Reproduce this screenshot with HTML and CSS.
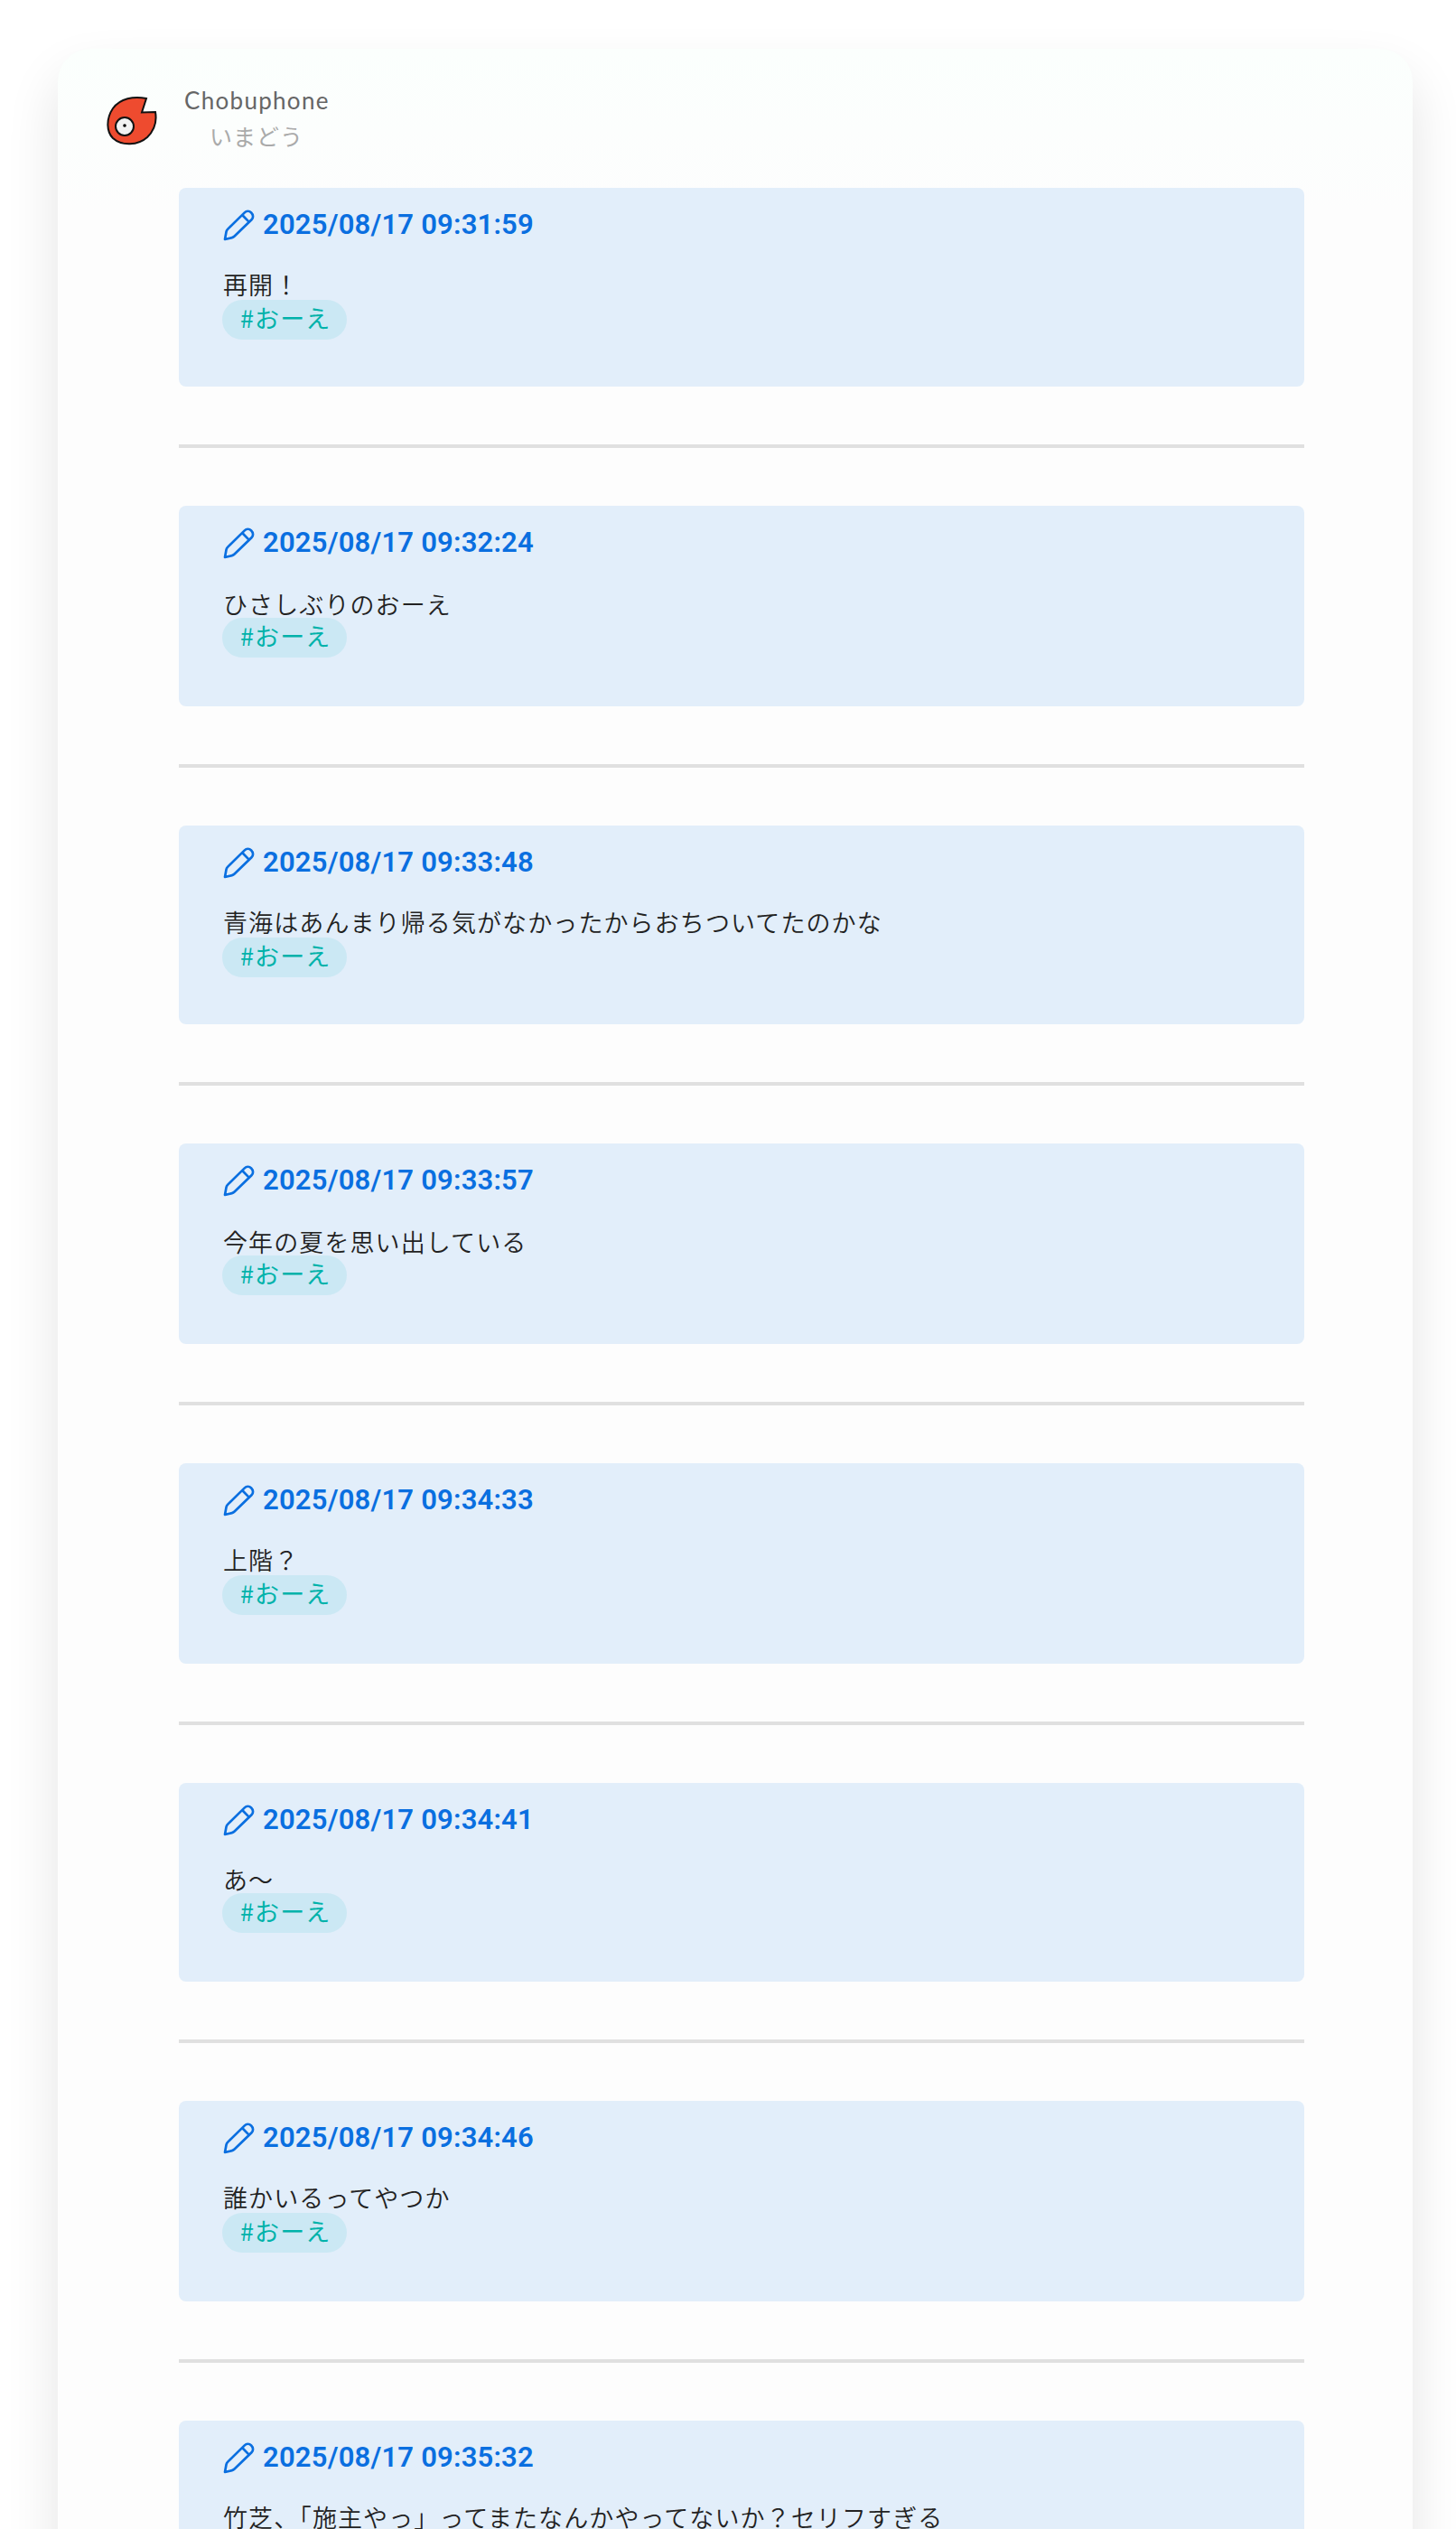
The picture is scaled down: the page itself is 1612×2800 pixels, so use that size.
FILE: index.html
```html
<!DOCTYPE html>
<html lang="ja">
<head>
  <title>いまどう</title>
  <meta charset="utf-8">
  <meta name="viewport" content="width=device-width, initial-scale=1">
  <link rel="stylesheet" href="styles.css">
</head>
<body>
  <svg class="sprite" aria-hidden="true">
    <symbol id="pencil" viewBox="0 0 36 36">
      <path d="M3 33 L4.6 24.3 Q5 22.8 6.2 21.6 L24.8 3.4 C26.8 1.4 30 1.4 32.2 3.5 C34.6 5.8 34.6 9.2 32.5 11.3 L13.6 29.4 Q12.3 30.6 10.7 31.1 Z M22.4 6.2 L29.6 13.6"/>
    </symbol>
  </svg>

  <main class="card">
    <header class="profile">
      <svg class="avatar" viewBox="0 0 60 60">
        <path class="avatar-body" d="M46 5 C32 2 17 5 9 16 C1 28 2 42 9 49 C19 58 37 57 47 48 C55 40 58 31 56 20 L41 20.5 Z"/>
        <circle class="avatar-eye" cx="22" cy="36" r="10"/>
        <circle cx="22" cy="35" r="1.8"/>
      </svg>
      <div class="profile-text">
        <p class="name">Chobuphone</p>
        <p class="status">いまどう</p>
      </div>
    </header>

    <div class="posts">
      <article class="post post-short">
        <a class="date" href="#"><svg class="icon"><use href="#pencil"/></svg>2025/08/17 09:31:59</a>
        <p class="text">再開！</p>
        <a class="tag" href="#">#おーえ</a>
      </article>
      <article class="post post-low">
        <a class="date" href="#"><svg class="icon"><use href="#pencil"/></svg>2025/08/17 09:32:24</a>
        <p class="text">ひさしぶりのおーえ</p>
        <a class="tag" href="#">#おーえ</a>
      </article>
      <article class="post post-short">
        <a class="date" href="#"><svg class="icon"><use href="#pencil"/></svg>2025/08/17 09:33:48</a>
        <p class="text">青海はあんまり帰る気がなかったからおちついてたのかな</p>
        <a class="tag" href="#">#おーえ</a>
      </article>
      <article class="post post-low">
        <a class="date" href="#"><svg class="icon"><use href="#pencil"/></svg>2025/08/17 09:33:57</a>
        <p class="text">今年の夏を思い出している</p>
        <a class="tag" href="#">#おーえ</a>
      </article>
      <article class="post">
        <a class="date" href="#"><svg class="icon"><use href="#pencil"/></svg>2025/08/17 09:34:33</a>
        <p class="text">上階？</p>
        <a class="tag" href="#">#おーえ</a>
      </article>
      <article class="post post-short post-tight">
        <a class="date" href="#"><svg class="icon"><use href="#pencil"/></svg>2025/08/17 09:34:41</a>
        <p class="text">あ〜</p>
        <a class="tag" href="#">#おーえ</a>
      </article>
      <article class="post">
        <a class="date" href="#"><svg class="icon"><use href="#pencil"/></svg>2025/08/17 09:34:46</a>
        <p class="text">誰かいるってやつか</p>
        <a class="tag" href="#">#おーえ</a>
      </article>
      <article class="post">
        <a class="date" href="#"><svg class="icon"><use href="#pencil"/></svg>2025/08/17 09:35:32</a>
        <p class="text">竹芝、「施主やっ」ってまたなんかやってないか？セリフすぎる</p>
        <a class="tag" href="#">#おーえ</a>
      </article>
    </div>
  </main>
</body>
</html>
```

FILE: styles.css
```css
*, *::before, *::after {
  margin: 0;
  padding: 0;
  box-sizing: border-box;
}

html {
  height: 2800px;
  overflow: hidden;
}

body {
  padding: 54px 48px 0 64px;
  background-color: #ffffff;
  color: #222222;
  font-size: 27px;
  font-family: "Noto Sans CJK JP", sans-serif;
}

a {
  color: inherit;
  text-decoration: none;
}

.sprite {
  display: none;
}

.card {
  min-height: 3000px;
  padding: 42px 120px 0 54px;
  border-radius: 36px;
  background: #fdfdfd linear-gradient(#fbfffd, #fdfdfd 180px) no-repeat;
  box-shadow: 0 30px 60px rgba(0, 0, 0, 0.11);
}

.profile {
  display: flex;
  height: 112px;
}

.avatar {
  width: 60px;
  height: 60px;
  margin: 8px 28px 0 -2px;
}

.avatar-body {
  fill: #ee4b2f;
}

.avatar-eye {
  fill: #f2f2f2;
}

.avatar-body, .avatar-eye {
  stroke: #111111;
  stroke-width: 2;
}

.name {
  color: #666666;
  font-size: 26px;
  font-family: Lato, sans-serif;
  line-height: 30px;
  letter-spacing: 1.3px;
}

.status {
  margin-top: 4px;
  padding-left: 28px;
  color: #aaaaaa;
  font-size: 25px;
  line-height: 40px;
  letter-spacing: 1px;
}

.posts {
  margin-left: 80px;
}

.post {
  height: 222px;
  padding: 24px 48px;
  border-radius: 8px;
  background-color: #e2eefa;
}

.post-short {
  height: 220px;
}

.post + .post {
  position: relative;
  margin-top: 132px;
}

.post + .post::before {
  content: "";
  position: absolute;
  top: -68px;
  left: 0;
  right: 0;
  height: 4px;
  background-color: #e0e0e0;
}

.date {
  display: flex;
  align-items: flex-start;
  height: 66px;
  color: #0a6fe0;
  font-size: 31px;
  font-family: Roboto, sans-serif;
  font-weight: 600;
  line-height: 34px;
  letter-spacing: 0.2px;
}

.icon {
  width: 36px;
  height: 36px;
  margin-right: 9px;
  fill: none;
  stroke: currentColor;
  stroke-width: 2.7;
  stroke-linejoin: round;
}

.text {
  margin-left: 1px;
  font-weight: 350;
  line-height: 34px;
  letter-spacing: 1.1px;
}

.post-low .date {
  height: 68px;
}

.post-low .text,
.post-tight .text {
  margin-bottom: -2px;
}

.tag {
  display: inline-block;
  height: 44px;
  padding: 0 18px 0 20px;
  border-radius: 22px;
  background-color: #cbe8f4;
  color: #00b2aa;
  line-height: 40px;
  letter-spacing: 1.1px;
}
```
